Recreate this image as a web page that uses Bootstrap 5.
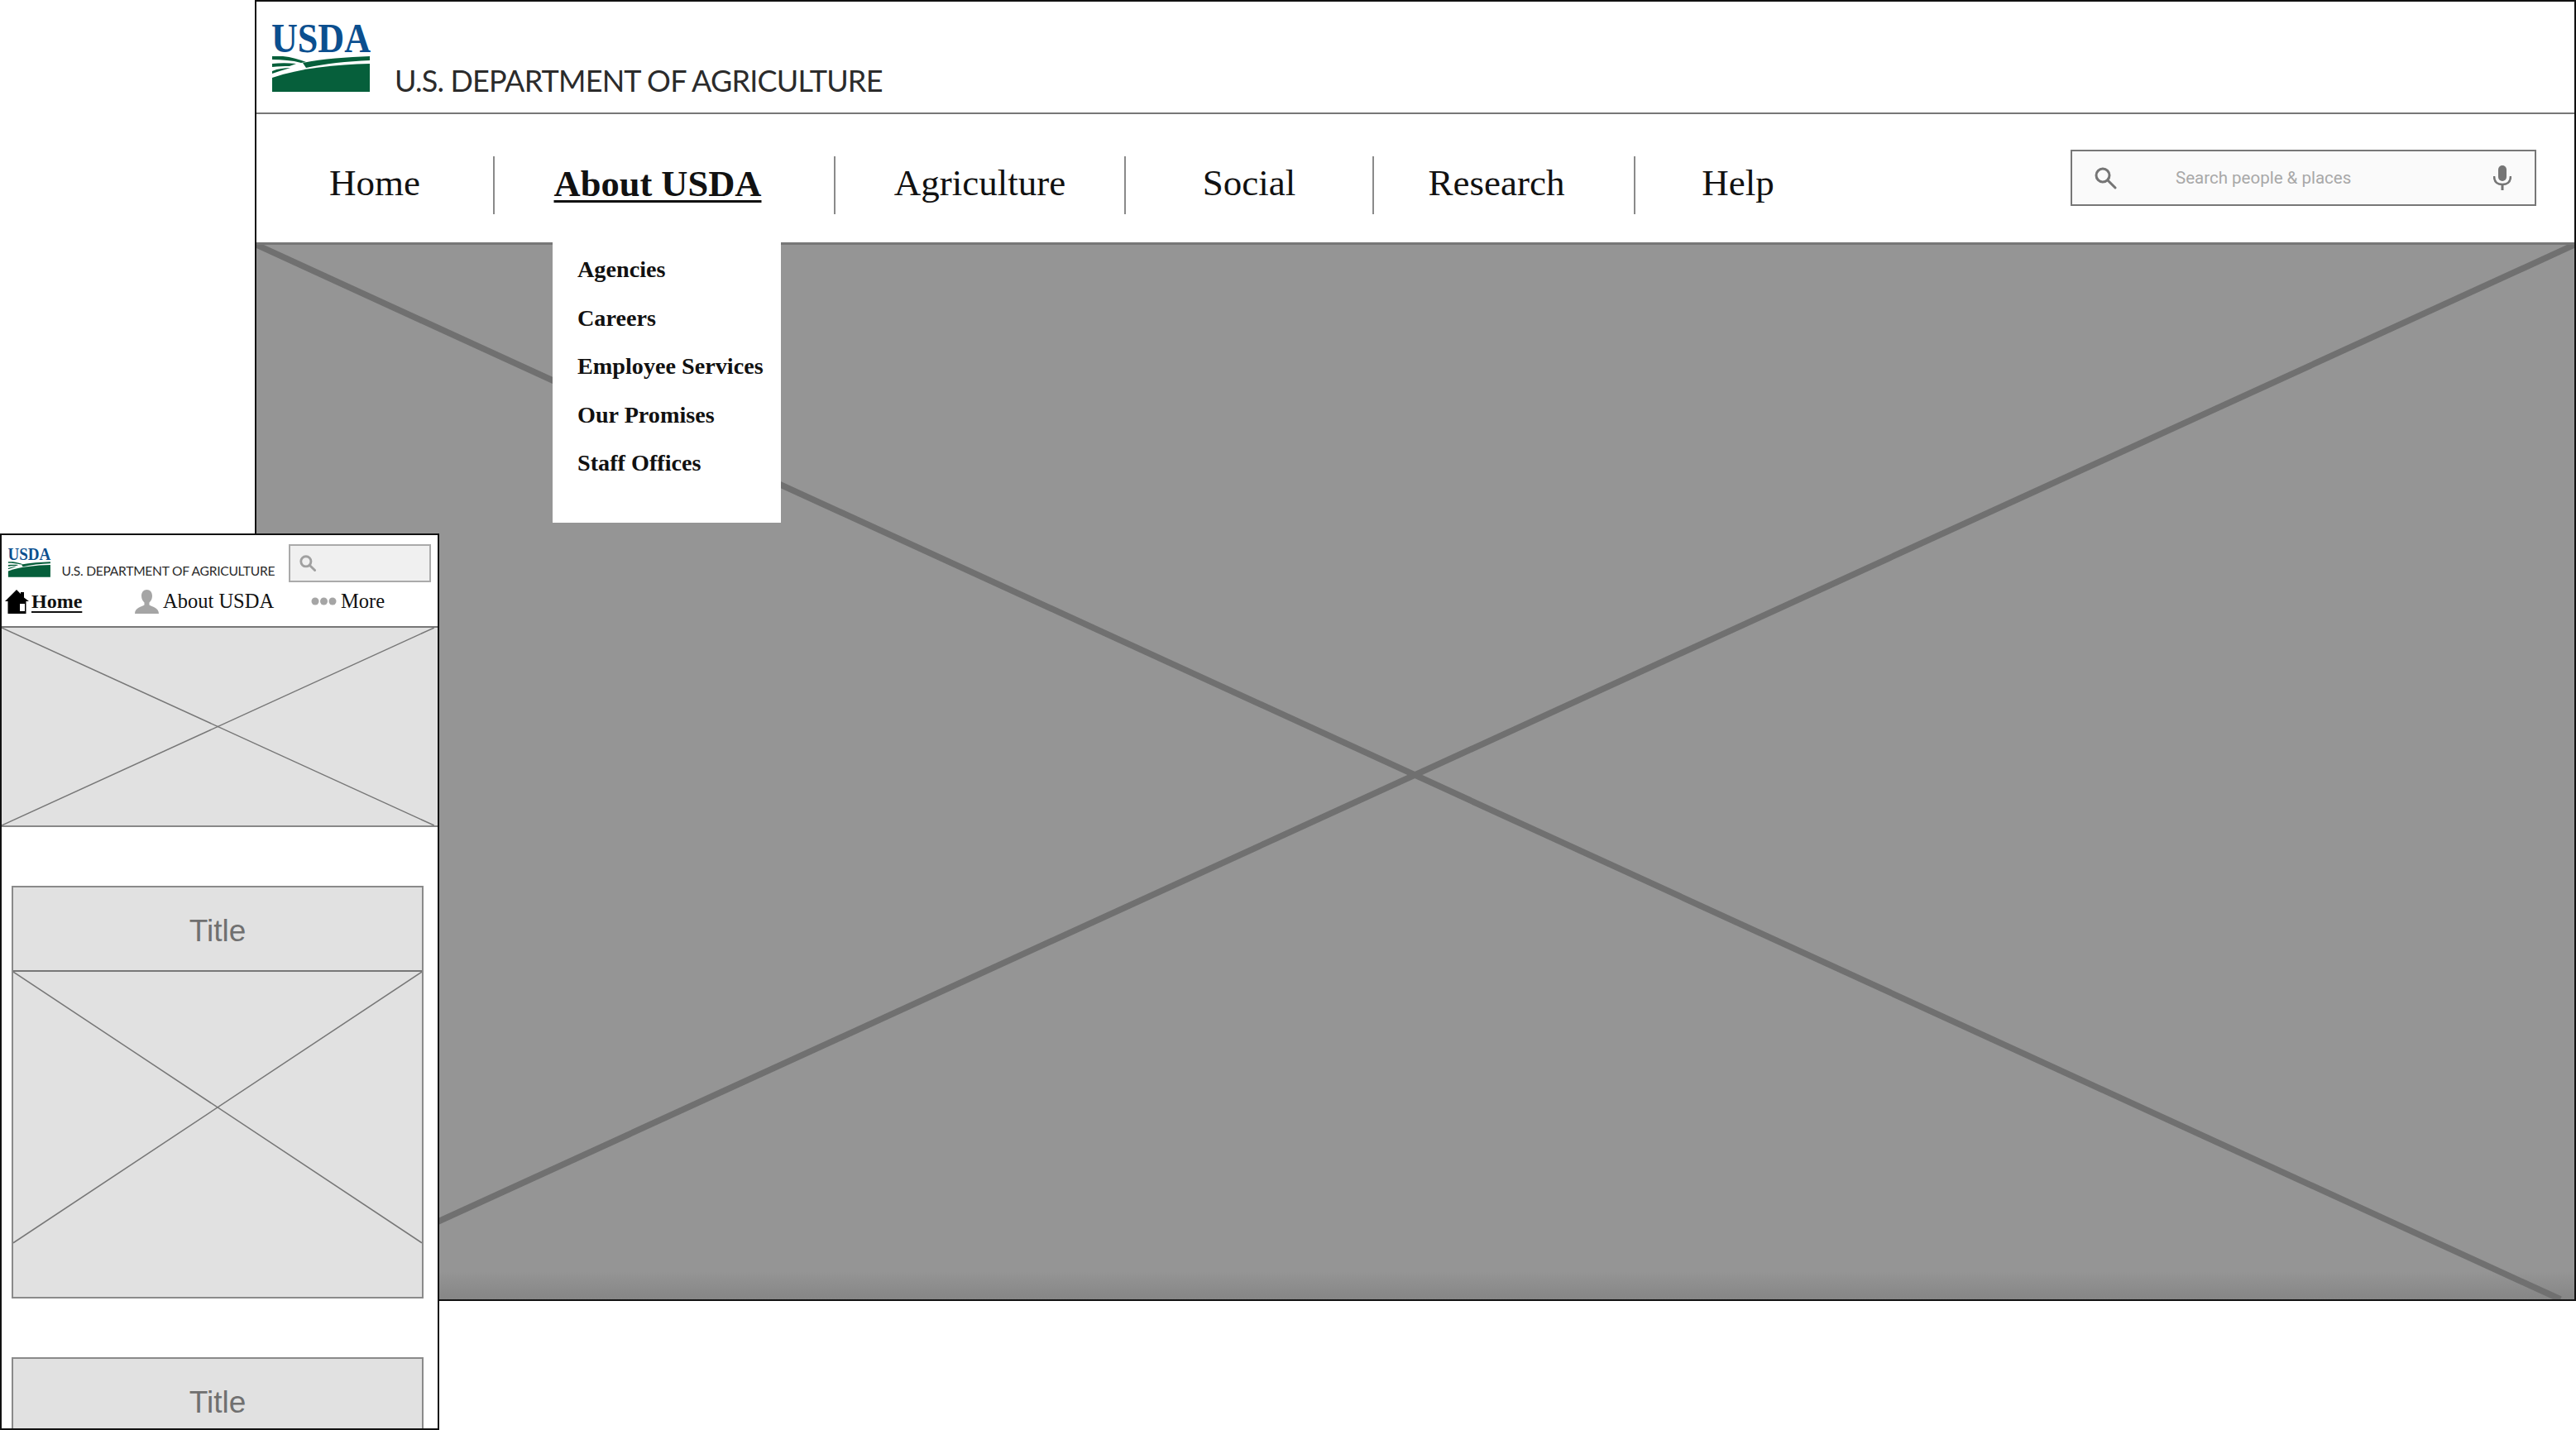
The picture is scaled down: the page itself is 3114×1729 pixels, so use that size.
<!DOCTYPE html>
<html lang="en">
<head>
    <meta charset="UTF-8">
    <title>USDA wireframe</title>
    <link href="https://cdn.jsdelivr.net/npm/bootstrap@5.3.0/dist/css/bootstrap.min.css" rel="stylesheet">
    <style>
        body { width: 3114px; height: 1729px; overflow: hidden; position: relative; background: #fff; }

        /* the two wireframes sit on a free canvas */
        .wire-desktop { position: absolute; left: 308px; top: 0; width: 2806px; height: 1573px; border: 2px solid #111; background: #fff; }
        .wire-mobile { position: absolute; left: 0; top: 645px; width: 531px; height: 1084px; border: 2px solid #111; background: #fff; overflow: hidden; }

        .brand-text { font-family: Lato, "Noto Sans", sans-serif; color: #2b2b2b; white-space: nowrap; }
        .cross { position: absolute; inset: 0; width: 100%; height: 100%; }

        /* desktop */
        .d-head { height: 136px; border-bottom: 2px solid #777; padding-left: 10px; }
        .d-logo { width: 140px; height: 100px; margin-top: 18px; }
        .d-head .brand-text { font-size: 36px; line-height: 1; margin: 77px 0 0 17px; letter-spacing: -.8px; }
        .d-nav { height: 155px; font-family: "Liberation Serif", serif; }
        .d-nav .nav { margin-top: 17px; }
        .d-item { height: 70px; display: flex; align-items: center; justify-content: center; border-right: 2px solid #8a8a8a; position: relative; }
        .d-item:last-child { border-right: 0; }
        .d-item > a { color: #111; font-size: 45px; text-decoration: none; padding: 0 0 4px; }
        .d-item > a.is-on { font-weight: 700; font-size: 44.5px; text-decoration: underline; text-decoration-thickness: 3px; text-underline-offset: 5px; }
        .w-home { width: 288px; }
        .w-about { width: 412px; padding-right: 16px; }
        .w-agri { width: 351px; }
        .w-social { width: 300px; }
        .w-research { width: 316px; padding-right: 18px; }
        .w-help { width: 248px; }
        .d-menu { display: block; top: 103px; left: 70px; width: 276px; height: 340px; min-width: 0; padding: 5px 0 0; margin: 0; background: #fff; border: 0; border-radius: 0; z-index: 5; }
        .d-menu .dropdown-item { font-size: 28.2px; font-weight: 700; line-height: 58.6px; padding: 0 0 0 30px; color: #111; }
        .d-search { width: 563px; height: 68px; margin: -2px 46px 0 auto; background: #fafafa; border: 2px solid #777; font-family: Roboto, sans-serif; font-size: 20.5px; color: #a8a8a8; padding: 0 28px 0 26px; }
        .d-search span { margin-left: 71px; padding-top: 2px; }
        .d-search .mic { margin-left: auto; }
        .d-hero { flex: 1 1 auto; position: relative; border-top: 3px solid #777; background: linear-gradient(to bottom, #959595 calc(100% - 34px), #868686); }

        /* mobile */
        .m-head { height: 58px; padding: 11px 8px 0 4px; }
        .m-logo { width: 61px; height: 44px; }
        .m-head .brand-text { font-size: 15.6px; line-height: 1; margin: 25px 0 0 8px; letter-spacing: -.27px; }
        .m-search { width: 173px; height: 46px; margin-left: 17px; background: #f0f0f0; border: 2px solid #aaa; padding-left: 11px; }
        .m-nav { height: 52px; padding-bottom: 8px; font-family: "Liberation Serif", serif; font-size: 24.5px; color: #111; }
        .m-nav a { color: #111; text-decoration: none; white-space: nowrap; }
        .m-nav .is-on { font-size: 24px; font-weight: 700; text-decoration: underline; text-decoration-thickness: 2px; text-underline-offset: 4px; }
        .m-home { width: 161px; padding-left: 4px; gap: 3px; }
        .m-about { width: 213px; gap: 5px; }
        .m-more { gap: 5px; }
        .m-hero { height: 243px; position: relative; background: #e1e1e1; border-top: 2px solid #777; border-bottom: 2px solid #888; }
        .m-card { width: 498px; margin: 0 0 71px 12px; background: #e1e1e1; border: 2px solid #8a8a8a; border-radius: 0; }
        .m-first { margin-top: 71px; }
        .m-title { height: 102px; background: #e1e1e1; border: 0; border-bottom: 2px solid #777; border-radius: 0 !important; font-family: "Liberation Sans", sans-serif; font-size: 37px; color: #707070; display: flex; align-items: center; justify-content: center; padding: 5px 0 0; }
        .m-pic { height: 393px; position: relative; }
    </style>
</head>
<body>
    <svg width="0" height="0" class="d-none">
        <symbol id="usda-logo" viewBox="0 0 140 100">
            <text x="8" y="43" font-family="Liberation Serif, serif" font-weight="700" font-size="50" fill="#0b4f8f" textLength="120" lengthAdjust="spacingAndGlyphs">USDA</text>
            <path fill="#065f3b" d="M9 91V74C45 62 85 58 127 57V91Z"/>
            <path fill="#065f3b" d="M127 48V53C100 54 72 57 50 62L46 56C70 51 100 49 127 48Z"/>
            <path fill="#065f3b" d="M9 48H22C32 49 42 52 50 55L44 56C33 53 21 52 9 52Z"/>
            <path fill="#065f3b" d="M9 57C18 56 28 56 38 57L30 60C23 60 16 60 9 61Z"/>
            <path fill="#065f3b" d="M9 66C16 63 24 62 31 62L18 66L9 69Z"/>
        </symbol>
    </svg>

    <div class="wire-desktop d-flex flex-column">
        <header class="d-head d-flex align-items-start flex-shrink-0">
            <svg class="d-logo"><use href="#usda-logo"/></svg>
            <div class="brand-text">U.S. DEPARTMENT OF AGRICULTURE</div>
        </header>

        <nav class="d-nav d-flex align-items-center flex-shrink-0">
            <ul class="nav flex-nowrap">
                <li class="nav-item d-item w-home"><a class="nav-link" href="#">Home</a></li>
                <li class="nav-item d-item w-about">
                    <a class="nav-link is-on" href="#">About USDA</a>
                    <ul class="dropdown-menu d-menu list-unstyled">
                        <li><a class="dropdown-item" href="#">Agencies</a></li>
                        <li><a class="dropdown-item" href="#">Careers</a></li>
                        <li><a class="dropdown-item" href="#">Employee Services</a></li>
                        <li><a class="dropdown-item" href="#">Our Promises</a></li>
                        <li><a class="dropdown-item" href="#">Staff Offices</a></li>
                    </ul>
                </li>
                <li class="nav-item d-item w-agri"><a class="nav-link" href="#">Agriculture</a></li>
                <li class="nav-item d-item w-social"><a class="nav-link" href="#">Social</a></li>
                <li class="nav-item d-item w-research"><a class="nav-link" href="#">Research</a></li>
                <li class="nav-item d-item w-help"><a class="nav-link" href="#">Help</a></li>
            </ul>
            <div class="d-search d-flex align-items-center">
                <svg width="28" height="28" viewBox="0 0 28 28" fill="none" stroke="#757575" stroke-width="3"><circle cx="11" cy="11" r="8"/><path d="M17 17l9 9" stroke-linecap="round"/></svg>
                <span>Search people &amp; places</span>
                <svg class="mic" width="22" height="30" viewBox="0 0 22 30"><rect x="6" y="0" width="10" height="19" rx="5" fill="#757575"/><path d="M1 13c0 7 4 10 10 10s10-3 10-10" fill="none" stroke="#757575" stroke-width="2.5"/><path d="M11 23v7" stroke="#757575" stroke-width="3"/></svg>
            </div>
        </nav>

        <div class="d-hero">
            <svg class="cross" viewBox="0 0 100 100" preserveAspectRatio="none">
                <path d="M0 0L99.400 100M100 0L0.500 100" stroke="#707070" stroke-width="7.500" vector-effect="non-scaling-stroke" fill="none"/>
            </svg>
        </div>
    </div>

    <div class="wire-mobile">
        <div class="m-head d-flex align-items-start">
            <svg class="m-logo"><use href="#usda-logo"/></svg>
            <div class="brand-text">U.S. DEPARTMENT OF AGRICULTURE</div>
            <div class="m-search d-flex align-items-center">
                <svg width="20" height="20" viewBox="0 0 28 28" fill="none" stroke="#a0a0a0" stroke-width="4"><circle cx="11" cy="11" r="8.5"/><path d="M17 17l9 9" stroke-linecap="round"/></svg>
            </div>
        </div>

        <div class="m-nav d-flex align-items-center">
            <a class="m-home d-flex align-items-center" href="#">
                <svg width="29" height="29" viewBox="0 0 29 29"><path fill="#000" fill-rule="evenodd" d="M14 0L19 5V3h4v6.500L29 14h-3.500v15H3.500V14H0zM18 17v9h6V17z"/></svg>
                <span class="is-on">Home</span>
            </a>
            <a class="m-about d-flex align-items-center" href="#">
                <svg width="29" height="29" viewBox="0 0 29 29"><path fill="#a5a5a5" d="M14.500 0c4 0 6.500 3 6.500 7.500 0 3.500-1.500 6.500-3.500 8v3c3 2 11.500 3 11.500 10.500H0c0-7.500 8.500-8.500 11.500-10.500v-3c-2-1.500-3.500-4.500-3.500-8C8 3 10.500 0 14.500 0z"/></svg>
                <span>About USDA</span>
            </a>
            <a class="m-more d-flex align-items-center" href="#">
                <svg width="31" height="10" viewBox="0 0 31 10" fill="#a5a5a5"><circle cx="5" cy="5" r="4.500"/><circle cx="15.500" cy="5" r="4.500"/><circle cx="26" cy="5" r="4.500"/></svg>
                <span>More</span>
            </a>
        </div>

        <div class="m-hero">
            <svg class="cross" viewBox="0 0 100 100" preserveAspectRatio="none">
                <path d="M0 0L99.200 100M99.200 0L0 100" stroke="#777" stroke-width="1.500" vector-effect="non-scaling-stroke" fill="none"/>
            </svg>
        </div>

        <div class="card m-card m-first">
            <div class="card-header m-title">Title</div>
            <div class="m-pic">
                <svg class="cross" viewBox="0 0 100 100" preserveAspectRatio="none">
                    <path d="M0 0L100 83.400M100 0L0 83.400" stroke="#777" stroke-width="1.500" vector-effect="non-scaling-stroke" fill="none"/>
                </svg>
            </div>
        </div>

        <div class="card m-card">
            <div class="card-header m-title">Title</div>
            <div class="m-pic"></div>
        </div>
    </div>

    <script src="https://cdn.jsdelivr.net/npm/bootstrap@5.3.0/dist/js/bootstrap.bundle.min.js"></script>
</body>
</html>
